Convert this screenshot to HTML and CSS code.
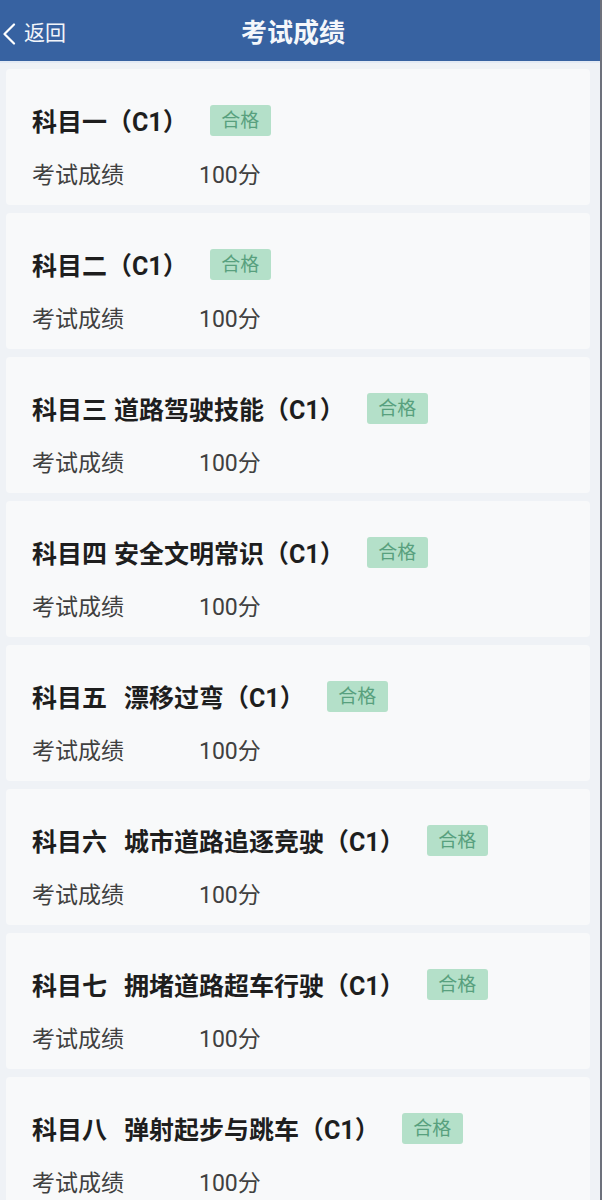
FILE: index.html
```html
<!DOCTYPE html>
<html lang="zh-CN">
<head>
<meta charset="utf-8">
<title>考试成绩</title>
<link rel="stylesheet" href="styles.css">
</head>
<body>
<div class="page">
  <header class="topbar">
    <div class="back">
      <svg class="chev" width="14" height="22" viewBox="0 0 14 22"><path d="M12 1.5 L2.5 11 L12 20.5" fill="none" stroke="#fff" stroke-width="2.2" stroke-linecap="round" stroke-linejoin="round"/></svg>
      <span class="back-text">返回</span>
    </div>
    <h1 class="title">考试成绩</h1>
  </header>
  <main class="list">
    <section class="card">
      <div class="card-head"><span class="name">科目一（C1）</span><span class="badge">合格</span></div>
      <div class="row"><span class="label">考试成绩</span><span class="value">100分</span></div>
    </section>
    <section class="card">
      <div class="card-head"><span class="name">科目二（C1）</span><span class="badge">合格</span></div>
      <div class="row"><span class="label">考试成绩</span><span class="value">100分</span></div>
    </section>
    <section class="card">
      <div class="card-head"><span class="name"><span class="no">科目三</span>道路驾驶技能（C1）</span><span class="badge">合格</span></div>
      <div class="row"><span class="label">考试成绩</span><span class="value">100分</span></div>
    </section>
    <section class="card">
      <div class="card-head"><span class="name"><span class="no">科目四</span>安全文明常识（C1）</span><span class="badge">合格</span></div>
      <div class="row"><span class="label">考试成绩</span><span class="value">100分</span></div>
    </section>
    <section class="card">
      <div class="card-head"><span class="name"><span class="no wide">科目五</span>漂移过弯（C1）</span><span class="badge">合格</span></div>
      <div class="row"><span class="label">考试成绩</span><span class="value">100分</span></div>
    </section>
    <section class="card">
      <div class="card-head"><span class="name"><span class="no wide">科目六</span>城市道路追逐竞驶（C1）</span><span class="badge">合格</span></div>
      <div class="row"><span class="label">考试成绩</span><span class="value">100分</span></div>
    </section>
    <section class="card">
      <div class="card-head"><span class="name"><span class="no wide">科目七</span>拥堵道路超车行驶（C1）</span><span class="badge">合格</span></div>
      <div class="row"><span class="label">考试成绩</span><span class="value">100分</span></div>
    </section>
    <section class="card">
      <div class="card-head"><span class="name"><span class="no wide">科目八</span>弹射起步与跳车（C1）</span><span class="badge">合格</span></div>
      <div class="row"><span class="label">考试成绩</span><span class="value">100分</span></div>
    </section>
  </main>
</div>
</body>
</html>
```
FILE: styles.css
```css
* { box-sizing: border-box; }
html, body { margin: 0; padding: 0; }
body {
  font-family: Roboto, "Noto Sans CJK SC", sans-serif;
  background: #eef1f6;
  width: 602px;
  height: 1200px;
  overflow: hidden;
}
.page {
  height: 1200px;
  border-right: 2px solid #6d717c;
  background: #eff2f6;
}
.topbar {
  height: 63px;
  background: #3762a1;
  display: flex;
  align-items: center;
  justify-content: center;
  position: relative;
  border-bottom: 2px solid #e3eaf4;
}
.back {
  position: absolute;
  left: 2px;
  top: 0;
  height: 63px;
  display: flex;
  align-items: center;
  gap: 8px;
  color: #fff;
}
.chev { display: block; margin-top: 4px; }
.back-text { font-size: 21px; line-height: 1; color: #f2f5fa; margin-top: 4px; }
.title {
  margin: 4px 0 0 -14px;
  font-size: 26px;
  font-weight: 700;
  color: #f4f7fb;
  line-height: 1;
}
.list {
  display: flex;
  flex-direction: column;
  gap: 8px;
  padding: 6px 10px 0 6px;
}
.card {
  background: #f8f9fa;
  height: 136px;
  padding: 40px 20px 0 26px;
  border-radius: 4px;
}
.card-head {
  display: flex;
  align-items: center;
  height: 28px;
}
.name {
  font-size: 25px;
  font-weight: 700;
  color: #1e1e1e;
  line-height: 28px;
  white-space: nowrap;
}
.no { margin-right: 7px; }
.no.wide { margin-right: 17px; }
.badge {
  margin-left: 22px;
  margin-top: -5px;
  width: 61px;
  height: 31px;
  line-height: 31px;
  text-align: center;
  background: #b4e0c9;
  color: #58a07e;
  font-size: 19px;
  border-radius: 3px;
}
.row {
  display: flex;
  margin-top: 22px;
  height: 28px;
  align-items: center;
  font-size: 23px;
  color: #404040;
}
.label { width: 167px; }
```
